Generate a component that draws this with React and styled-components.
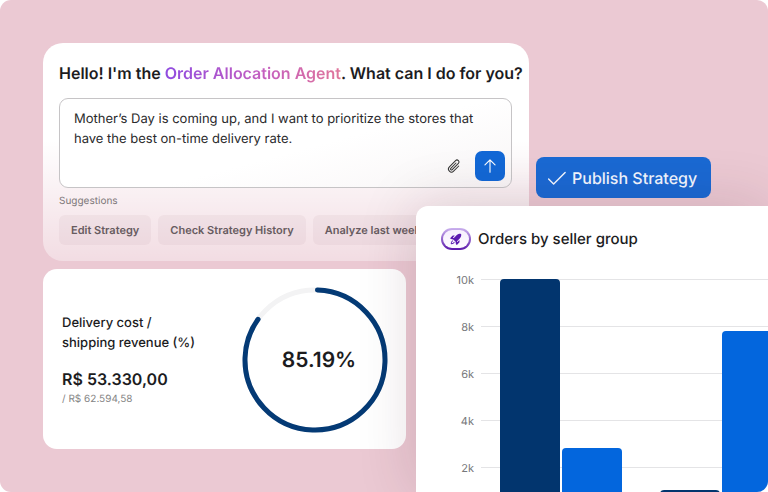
import React from "react";
import styled, { createGlobalStyle } from "styled-components";
import {
  PiArrowUp,
  PiCheck,
  PiPaperclip,
  PiRocketLaunchFill,
} from "react-icons/pi";

const suggestions = [
  "Edit Strategy",
  "Check Strategy History",
  "Analyze last week",
];

const ticks = ["10k", "8k", "6k", "4k", "2k"];
const maxValue = 10000;

const groups = [
  { name: "Group 1", current: 10000, previous: 2800 },
  { name: "Group 2", current: 1040, previous: 7800 },
];

const share = 85.19;

const Donut = () => {
  const radius = 70;
  const length = 2 * Math.PI * radius;
  const filled = (length * (share - 1)) / 100;

  return (
    <DonutBox>
      <svg viewBox="0 0 146 146" aria-hidden="true">
        <circle className="track" cx="73" cy="73" r={radius} />
        <circle
          className="value"
          cx="73"
          cy="73"
          r={radius}
          strokeDasharray={`${filled} ${length}`}
          transform="rotate(-88 73 73)"
        />
      </svg>
      <strong>{share}%</strong>
    </DonutBox>
  );
};

const AgentPanel = () => (
  <AgentCard>
    <Title>
      Hello! I'm the <span>Order Allocation Agent</span>. What can I do for you?
    </Title>
    <Prompt>
      <textarea
        aria-label="Message"
        rows={2}
        defaultValue="Mother’s Day is coming up, and I want to prioritize the stores that have the best on-time delivery rate."
      />
      <PromptActions>
        <AttachButton type="button" aria-label="Attach file">
          <PiPaperclip />
        </AttachButton>
        <SendButton type="button" aria-label="Send">
          <PiArrowUp />
        </SendButton>
      </PromptActions>
    </Prompt>
    <SuggestionsLabel>Suggestions</SuggestionsLabel>
    <Suggestions>
      {suggestions.map((text) => (
        <Chip type="button" key={text}>
          {text}
        </Chip>
      ))}
    </Suggestions>
  </AgentCard>
);

const OrdersChart = () => (
  <ChartCard>
    <ChartHeader>
      <Badge>
        <PiRocketLaunchFill />
      </Badge>
      <h2>Orders by seller group</h2>
    </ChartHeader>
    <Chart>
      <Axis>
        {ticks.map((tick) => (
          <li key={tick}>
            <span>{tick}</span>
          </li>
        ))}
      </Axis>
      <Bars>
        {groups.map((group) => (
          <Group key={group.name}>
            <Bar
              $color="#02356e"
              style={{ height: `${(group.current / maxValue) * 100}%` }}
            />
            <Bar
              $color="#0366dd"
              style={{ height: `${(group.previous / maxValue) * 100}%` }}
            />
          </Group>
        ))}
      </Bars>
    </Chart>
  </ChartCard>
);

export default function App() {
  return (
    <>
      <GlobalStyle />
      <Stage>
        <AgentPanel />
        <PublishButton type="button">
          <PiCheck />
          Publish Strategy
        </PublishButton>
        <MetricCard>
          <MetricText>
            <h2>
              Delivery cost /<br />
              shipping revenue (%)
            </h2>
            <strong>R$ 53.330,00</strong>
            <small>/ R$ 62.594,58</small>
          </MetricText>
          <Donut />
        </MetricCard>
        <OrdersChart />
      </Stage>
    </>
  );
}

const GlobalStyle = createGlobalStyle`
  * {
    box-sizing: border-box;
  }

  body {
    margin: 0;
    background: #fff;
    color: #1c1c1e;
    font-family: Inter, "Liberation Sans", sans-serif;
    text-rendering: geometricPrecision;
  }

  h1, h2, p, ul {
    margin: 0;
    padding: 0;
  }

  button, textarea {
    font-family: inherit;
    text-rendering: inherit;
    border: 0;
  }

  button {
    cursor: pointer;
  }
`;

const Stage = styled.main`
  height: 100vh;
  padding: 43px 0 0 43px;
  border-radius: 11px;
  background: #ebc9d3;
  overflow: hidden;
  display: grid;
  grid-template-columns: 373fr 120fr 232fr;
  grid-template-rows: 163px auto auto minmax(0, 1fr);
`;

const AgentCard = styled.section`
  grid-column: 1 / 3;
  grid-row: 1 / 3;
  min-width: 0;
  margin-right: 7px;
  padding: 18px 17px 16px 16px;
  border-radius: 20px;
  background: linear-gradient(#fff 45%, rgba(255, 255, 255, 0.36));
`;

const Title = styled.h1`
  font-size: 16px;
  line-height: 24px;
  font-weight: 600;
  white-space: nowrap;

  span {
    background: linear-gradient(90deg, #8f4be0, #c45fc0 55%, #e0759a);
    background-clip: text;
    -webkit-background-clip: text;
    color: transparent;
  }
`;

const Prompt = styled.div`
  margin-top: 13px;
  padding: 10px 6px 6px 14px;
  border: 1px solid #c6c4c6;
  border-radius: 9px;
  background: linear-gradient(165deg, #fff 55%, #f8f5f6);
  display: flex;
  flex-direction: column;

  textarea {
    display: block;
    height: 42px;
    padding: 0;
    resize: none;
    outline: none;
    overflow: hidden;
    background: transparent;
    color: #2a2a2c;
    font-size: 13px;
    line-height: 20px;
  }
`;

const PromptActions = styled.div`
  display: flex;
  align-items: center;
  justify-content: flex-end;
  gap: 13px;
`;

const AttachButton = styled.button`
  display: flex;
  padding: 0;
  background: transparent;
  color: #333;
  font-size: 16px;
`;

const SendButton = styled.button`
  width: 30px;
  height: 30px;
  padding: 0;
  display: flex;
  align-items: center;
  justify-content: center;
  border-radius: 7px;
  background: #1268d6;
  color: #fff;
  font-size: 18px;
`;

const SuggestionsLabel = styled.p`
  margin-top: 6px;
  color: #7c7678;
  font-size: 10px;
  line-height: 14px;
`;

const Suggestions = styled.div`
  margin-top: 7px;
  display: flex;
  gap: 7px;
  overflow: hidden;
`;

const Chip = styled.button`
  flex-shrink: 0;
  height: 30px;
  padding: 0 12px;
  border-radius: 6px;
  background: rgba(110, 60, 75, 0.05);
  color: #675b60;
  font-size: 11px;
  font-weight: 600;
`;

const PublishButton = styled.button`
  grid-column: 3;
  grid-row: 1;
  align-self: end;
  justify-self: start;
  height: 41px;
  margin-bottom: 8px;
  padding: 0 14px 0 9px;
  display: flex;
  align-items: center;
  gap: 4px;
  border-radius: 8px;
  background: #1a69d3;
  color: #f2f7ff;
  font-size: 16px;
  font-weight: 500;

  svg {
    font-size: 23px;
  }
`;

const MetricCard = styled.section`
  grid-column: 1;
  grid-row: 3;
  height: 180px;
  margin: 8px 10px 0 0;
  padding: 2px 18px 0 19px;
  display: flex;
  align-items: center;
  justify-content: space-between;
  border-radius: 14px;
  background: #fff;
`;

const MetricText = styled.div`
  display: flex;
  flex-direction: column;

  h2 {
    font-size: 13px;
    line-height: 20px;
    font-weight: 500;
  }

  strong {
    margin-top: 14px;
    font-size: 16px;
    line-height: 24px;
    font-weight: 600;
  }

  small {
    color: #858585;
    font-size: 10px;
    line-height: 16px;
  }
`;

const DonutBox = styled.div`
  width: 146px;
  display: grid;
  place-items: center;

  svg,
  strong {
    grid-area: 1 / 1;
  }

  svg {
    width: 100%;
    fill: none;
    stroke-width: 5;
  }

  .track {
    stroke: #f3f3f4;
  }

  .value {
    stroke: #043a75;
    stroke-linecap: round;
  }

  strong {
    padding-left: 8px;
    font-size: 21px;
    font-weight: 600;
  }
`;

const ChartCard = styled.section`
  grid-column: 2 / 4;
  grid-row: 2 / 5;
  z-index: 1;
  min-height: 0;
  padding: 22px 0 0 25px;
  border-radius: 12px 0 0 0;
  background: #fff;
  box-shadow: 0 0 60px rgba(60, 20, 40, 0.16);
`;

const ChartHeader = styled.header`
  display: flex;
  align-items: center;
  gap: 7px;

  h2 {
    font-size: 15px;
    line-height: 22px;
    font-weight: 500;
  }
`;

const Badge = styled.span`
  width: 30px;
  height: 22px;
  display: flex;
  align-items: center;
  justify-content: center;
  border: 2px solid transparent;
  border-radius: 11px;
  background: linear-gradient(#f6f0fd, #fdfbff) padding-box,
    linear-gradient(#cbb2ee, #5a17ab) border-box;
  color: #5b1bb0;
  font-size: 14px;
`;

const Chart = styled.div`
  margin-top: 29px;
  display: grid;
  grid-template-rows: 235px;
`;

const Axis = styled.ul`
  grid-area: 1 / 1;
  list-style: none;

  li {
    height: 47px;
    display: flex;
    align-items: flex-start;
    gap: 7px;
    color: #77787b;
    font-size: 11px;
    line-height: 2px;
  }

  span {
    width: 33px;
    text-align: right;
  }

  li::after {
    content: "";
    flex: 1;
    height: 1px;
    background: #e4e4e6;
  }
`;

const Bars = styled.div`
  grid-area: 1 / 1;
  padding-left: 59px;
  display: flex;
  gap: 38px;
  overflow: hidden;
`;

const Group = styled.div`
  flex-shrink: 0;
  display: flex;
  align-items: flex-end;
  gap: 2px;
`;

const Bar = styled.div`
  width: 60px;
  border-radius: 4px 4px 0 0;
  background: ${(props) => props.$color};
`;
